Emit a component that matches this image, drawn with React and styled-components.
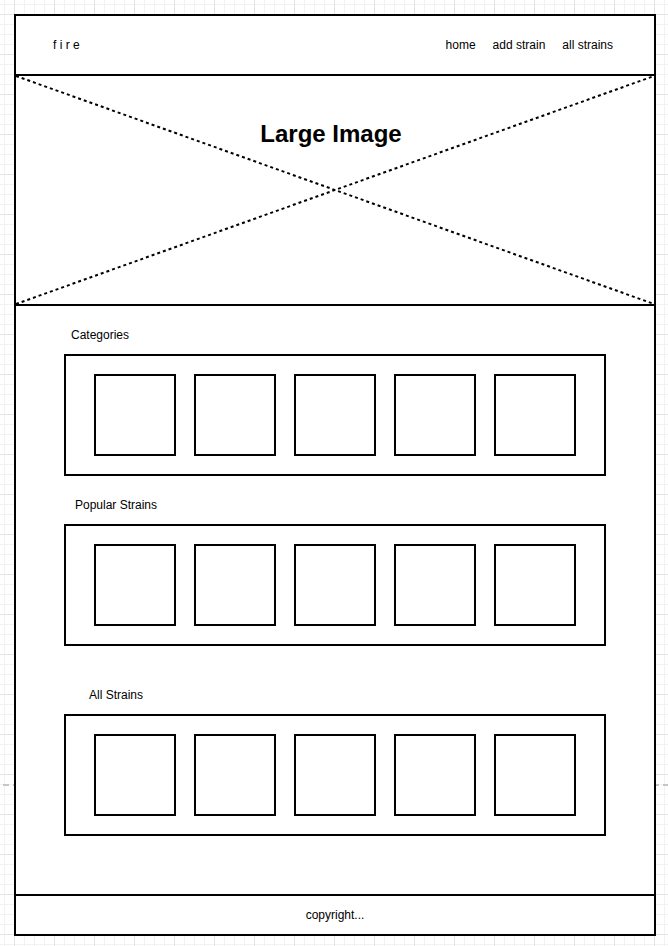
import React from 'react';
import styled, { createGlobalStyle } from 'styled-components';

const Global = createGlobalStyle`
  html, body { margin: 0; padding: 0; }
  body {
    min-height: 946px;
    font-family: "Liberation Sans", Arial, Helvetica, sans-serif;
    color: #000;
    background-color: #fff;
    background-image:
      linear-gradient(to right, #c6c6c6 6px, transparent 6px),
      linear-gradient(to right, #e4e4e4 1px, transparent 1px),
      linear-gradient(to bottom, #e4e4e4 1px, transparent 1px),
      linear-gradient(to right, #f2f2f2 1px, transparent 1px),
      linear-gradient(to bottom, #f2f2f2 1px, transparent 1px);
    background-size: 10px 2px, 40px 40px, 40px 40px, 10px 10px, 10px 10px;
    background-position: 3px 784px, 14px 14px, 14px 14px, 4px 4px, 4px 4px;
    background-repeat: repeat-x, repeat, repeat, repeat, repeat;
  }
`;

const Frame = styled.div`
  margin: 14px;
  width: 642px;
  box-sizing: border-box;
  border: 2px solid #000;
  background: #fff;
  display: flex;
  flex-direction: column;
`;

const Header = styled.header`
  height: 58px;
  border-bottom: 2px solid #000;
  display: flex;
  align-items: center;
  justify-content: space-between;
  padding: 0 41px 0 37px;
  font-size: 12px;
`;

const Logo = styled.div`
  font-size: 12px;
  white-space: pre;
`;

const Nav = styled.nav`
  display: flex;
  gap: 17px;
`;

const NavLink = styled.span`
  font-size: 12px;
`;

const Hero = styled.section`
  position: relative;
  height: 228px;
  border-bottom: 2px solid #000;
  box-sizing: content-box;
  display: flex;
  justify-content: center;
  align-items: flex-start;
  padding-right: 8px;
`;

const Cross = styled.svg`
  position: absolute;
  left: 0;
  top: 0;
  width: 100%;
  height: 100%;
  overflow: visible;
`;

const HeroTitle = styled.h1`
  position: relative;
  margin: 44px 0 0;
  font-size: 24px;
  line-height: 28px;
  font-weight: 700;
`;

const Main = styled.main`
  height: 590px;
  border-bottom: 2px solid #000;
  padding-top: 22px;
  box-sizing: border-box;
  display: flex;
  flex-direction: column;
`;

const Section = styled.section`
  display: flex;
  flex-direction: column;
  gap: 12px;
  margin-top: ${(p) => p.$top}px;
`;

const Label = styled.div`
  font-size: 12px;
  line-height: 14px;
  margin-left: ${(p) => p.$indent}px;
`;

const Strip = styled.div`
  margin: 0 48px;
  height: 122px;
  box-sizing: border-box;
  border: 2px solid #000;
  display: flex;
  align-items: center;
  justify-content: center;
  gap: 18px;
`;

const Tile = styled.div`
  width: 82px;
  height: 82px;
  box-sizing: border-box;
  border: 2px solid #000;
`;

const Footer = styled.footer`
  height: 38px;
  display: flex;
  align-items: center;
  justify-content: center;
  font-size: 12px;
`;

const sections = [
  { title: 'Categories', indent: 55, top: 0 },
  { title: 'Popular Strains', indent: 59, top: 22 },
  { title: 'All Strains', indent: 73, top: 42 },
];

export default function App() {
  return (
    <>
      <Global />
      <Frame>
        <Header>
          <Logo>f i r e</Logo>
          <Nav>
            <NavLink>home</NavLink>
            <NavLink>add strain</NavLink>
            <NavLink>all strains</NavLink>
          </Nav>
        </Header>
        <Hero>
          <Cross aria-hidden="true">
            <line x1="0" y1="0" x2="100%" y2="100%" stroke="#000" strokeWidth="2" strokeDasharray="3 3" />
            <line x1="0" y1="100%" x2="100%" y2="0" stroke="#000" strokeWidth="2" strokeDasharray="3 3" />
          </Cross>
          <HeroTitle>Large Image</HeroTitle>
        </Hero>
        <Main>
          {sections.map((s) => (
            <Section key={s.title} $top={s.top}>
              <Label $indent={s.indent}>{s.title}</Label>
              <Strip>
                {[0, 1, 2, 3, 4].map((i) => (
                  <Tile key={i} />
                ))}
              </Strip>
            </Section>
          ))}
        </Main>
        <Footer>copyright...</Footer>
      </Frame>
    </>
  );
}
